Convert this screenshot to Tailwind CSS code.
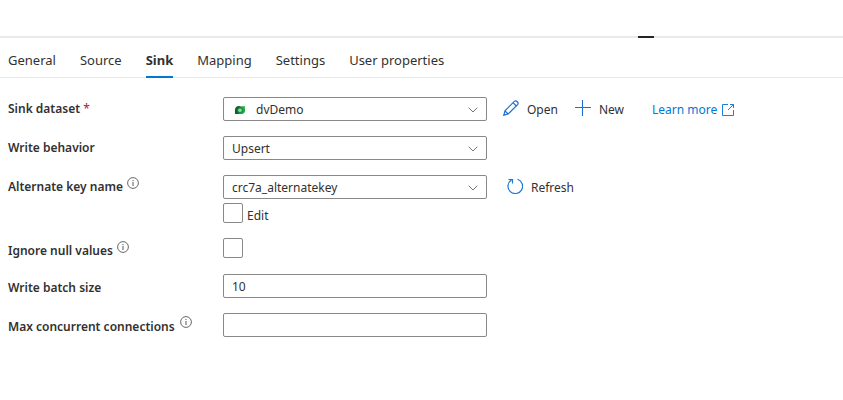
<!DOCTYPE html>
<html lang="en">
<head>
<meta charset="utf-8">
<meta name="viewport" content="width=device-width, initial-scale=1">
<title>Copy data – Sink</title>
<script src="https://cdn.jsdelivr.net/npm/@tailwindcss/browser@4"></script>
</head>
<body class="min-h-screen bg-white font-['Noto_Sans','Open_Sans',sans-serif] text-[12px] leading-4 text-[#323130]">
<svg class="hidden" aria-hidden="true">
  <symbol id="chevron" viewBox="0 0 10 6"><path d="M.7.7 5 5 9.3.7" fill="none" stroke="#797775" stroke-width="1"/></symbol>
  <symbol id="info" viewBox="0 0 12 12"><circle cx="6" cy="6" r="5.4" fill="none" stroke="#55575a" stroke-width=".9"/><path d="M6 5v4M6 3v1.1" stroke="#55575a" stroke-width="1"/></symbol>
</svg>

<!-- Pane splitter -->
<div class="flex h-[38px] items-end">
  <div class="flex h-[2px] w-full justify-end bg-[#eaeaea] pr-[189px]"><div class="w-4 bg-[#252423]"></div></div>
</div>

<nav class="flex h-10 gap-6 border-b border-[#eaeaea] px-2 pt-3 text-[13px] leading-5">
  <a href="#" class="h-7">General</a>
  <a href="#" class="h-7">Source</a>
  <a href="#" aria-current="page" class="h-7 border-b-2 border-[#0078d4] font-bold">Sink</a>
  <a href="#" class="h-7">Mapping</a>
  <a href="#" class="h-7">Settings</a>
  <a href="#" class="h-7">User properties</a>
</nav>

<form class="flex flex-col gap-[15px] px-2 pt-[19px]">
  <div class="flex items-start">
    <label for="dataset" class="w-[215px] shrink-0 pt-1 font-semibold">Sink dataset <span class="font-normal text-[#a4262c]">*</span></label>
    <div class="relative w-[264px]">
      <select id="dataset" class="block h-6 w-full appearance-none rounded-[2px] border border-[#8a8886] bg-white pt-px pr-6 pl-8"><option>dvDemo</option></select>
      <svg class="pointer-events-none absolute top-[9px] left-[12px] h-[8px] w-[10px]" viewBox="0 0 10 8"><path d="M0 3.800C0 1.400 1.500 0 4 0L8 1 7 8H0z" fill="#0f5f3a"/><path d="M6 .8 10 0v4.500C10 7 8.500 8 6 8H4z" fill="#22a447"/><path d="M8 .4 10 0v3z" fill="#43d05a"/><circle cx="5" cy="4.200" r="2.800" fill="#1c8a41"/><circle cx="5" cy="4.200" r="1.800" fill="#8ae28c"/></svg>
      <svg class="pointer-events-none absolute top-[10px] right-[9px] h-[6px] w-[10px]"><use href="#chevron"/></svg>
    </div>
    <div class="flex h-6 items-center pt-px pl-4">
      <button type="button" class="flex items-center gap-2">
        <svg class="-mt-1 h-4 w-4" viewBox="0 0 16 16" fill="none" stroke="#1a6fd0" stroke-width="1.200"><path d="M.8 15.200 2 10.800 11.300 1.400c1.900-1.600 4.900 1.400 3.300 3.300L5.200 14zM2 10.800 5.200 14M10 2.700 13.300 6"/></svg>
        Open
      </button>
      <button type="button" class="ml-[17px] flex items-center gap-2">
        <svg class="-mt-1 h-4 w-4" viewBox="0 0 16 16" stroke="#1a6fd0" stroke-width="1.100"><path d="M7.500 0v16M0 7.500h16"/></svg>
        New
      </button>
      <a href="#" class="ml-7 flex items-center gap-[5px] text-[#0078d4]">
        Learn more
        <svg class="h-3 w-3" viewBox="0 0 12 12" fill="none" stroke="#1a80d8"><path d="M6 .5H.5v11h11V6M8 .5h3.500V4M11.500.5 6 6"/></svg>
      </a>
    </div>
  </div>

  <div class="flex items-start">
    <label for="behavior" class="w-[215px] shrink-0 pt-1 font-semibold">Write behavior</label>
    <div class="relative w-[264px]">
      <select id="behavior" class="block h-6 w-full appearance-none rounded-[2px] border border-[#8a8886] bg-white pt-px pr-6 pl-2"><option>Upsert</option></select>
      <svg class="pointer-events-none absolute top-[10px] right-[9px] h-[6px] w-[10px]"><use href="#chevron"/></svg>
    </div>
  </div>

  <div class="flex items-start">
    <div class="flex w-[215px] shrink-0 items-start gap-1 pt-1">
      <label for="altkey" class="font-semibold">Alternate key name</label>
      <svg class="-mt-[2px] h-3 w-3" role="img" aria-label="Info"><use href="#info"/></svg>
    </div>
    <div class="flex w-[264px] flex-col gap-1">
      <div class="relative">
        <select id="altkey" class="block h-6 w-full appearance-none rounded-[2px] border border-[#8a8886] bg-white pt-px pr-6 pl-2"><option>crc7a_alternatekey</option></select>
        <svg class="pointer-events-none absolute top-[10px] right-[9px] h-[6px] w-[10px]"><use href="#chevron"/></svg>
      </div>
      <div class="flex h-5 gap-1">
        <input id="edit" type="checkbox" class="h-5 w-5 appearance-none rounded-[2px] border border-[#8a8886] checked:bg-[#0078d4]">
        <label for="edit" class="pt-[5px]">Edit</label>
      </div>
    </div>
    <button type="button" class="flex h-6 items-center gap-2 pt-px pl-5">
      <svg class="-mt-1 h-4 w-4" viewBox="0 0 16 16" fill="none" stroke="#1a7bd6" stroke-width="1.200"><path d="M10.500 1.300A7.300 7.300 0 1 1 4.500 2M1.500 1.500h4v4"/></svg>
      Refresh
    </button>
  </div>

  <div class="flex items-start">
    <div class="flex w-[215px] shrink-0 items-start gap-1 pt-[5px]">
      <label for="nulls" class="font-semibold">Ignore null values</label>
      <svg class="-mt-[2px] h-3 w-3" role="img" aria-label="Info"><use href="#info"/></svg>
    </div>
    <input id="nulls" type="checkbox" class="h-5 w-5 appearance-none rounded-[2px] border border-[#8a8886] checked:bg-[#0078d4]">
  </div>

  <div class="flex items-start">
    <label for="batch" class="w-[215px] shrink-0 pt-[6px] font-semibold">Write batch size</label>
    <input id="batch" type="text" value="10" class="h-6 w-[264px] rounded-[2px] border border-[#8a8886] px-2 pt-px">
  </div>

  <div class="flex items-start">
    <div class="flex w-[215px] shrink-0 items-start gap-[5px] pt-[6px]">
      <label for="maxconn" class="font-semibold">Max concurrent connections</label>
      <svg class="-mt-[3px] h-3 w-3" role="img" aria-label="Info"><use href="#info"/></svg>
    </div>
    <input id="maxconn" type="text" class="h-6 w-[264px] rounded-[2px] border border-[#8a8886] px-2">
  </div>
</form>
</body>
</html>
